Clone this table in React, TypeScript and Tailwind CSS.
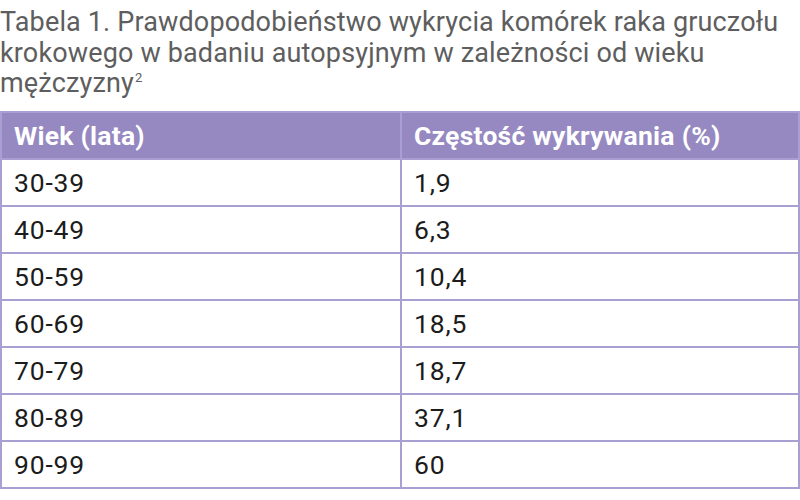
const rows = [
  ['30-39', '1,9'],
  ['40-49', '6,3'],
  ['50-59', '10,4'],
  ['60-69', '18,5'],
  ['70-79', '18,7'],
  ['80-89', '37,1'],
  ['90-99', '60'],
]

export default function App() {
  return (
    <div className="w-[800px] h-[500px] bg-white font-['Roboto',sans-serif] overflow-hidden">
      <p className="pt-[7px] h-[111px] text-[27px] leading-[30.5px] tracking-[0.15px] text-[#5e5e5e]">
        Tabela 1. Prawdopodobieństwo wykrycia komórek raka gruczołu krokowego w badaniu autopsyjnym w zależności od wieku mężczyzny<sup className="text-[13px] leading-[0] align-[4px] ml-[1px]">2</sup>
      </p>
      <table className="w-[800px] border-collapse table-fixed">
        <thead>
          <tr className="h-[47px] bg-[#9689c1] text-white tracking-[0.25px]">
            <th className="w-[400px] border-2 border-[#a99fd3] px-[12px] text-left text-[26.5px] font-bold">Wiek (lata)</th>
            <th className="border-2 border-[#a99fd3] px-[12px] text-left text-[26.5px] font-bold">Częstość wykrywania (%)</th>
          </tr>
        </thead>
        <tbody>
          {rows.map(([age, freq]) => (
            <tr key={age} className="h-[47px] text-[#1c1c1c] tracking-[0.8px]">
              <td className="border-2 border-[#a99fd3] px-[12px] text-[26.5px]">{age}</td>
              <td className="border-2 border-[#a99fd3] px-[12px] text-[26.5px]">{freq}</td>
            </tr>
          ))}
        </tbody>
      </table>
    </div>
  )
}
